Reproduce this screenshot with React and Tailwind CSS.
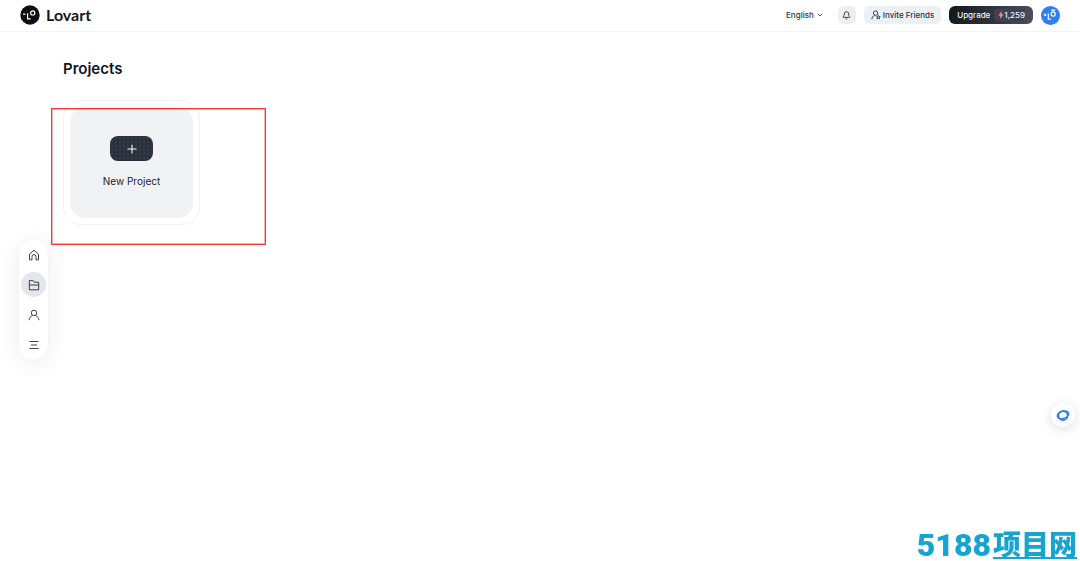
import React from "react";
import { ChevronDown, Bell, Plus } from "lucide-react";

const navItems = [
  {
    label: "Home",
    icon: (
      <path d="M1.5 10.8V5.2L6 1.2l4.5 4v5.6H8V7.6a2 2 0 0 0-4 0v3.2z" />
    ),
  },
  {
    label: "Projects",
    active: true,
    icon: (
      <path d="M1.3 10.8V1.6h3.8l1.2 1.6h4.4v7.6zM1.3 6h9.4" />
    ),
  },
  {
    label: "Account",
    icon: (
      <>
        <circle cx="6" cy="3.9" r="2.7" />
        <path d="M1 11.2c.4-2.4 1.8-4 3.4-4.9M11 11.2c-.4-2.4-1.8-4-3.4-4.9" />
      </>
    ),
  },
  {
    label: "Menu",
    icon: <path d="M1.5 2.5h9M3 6h6M1.5 9.5h9" />,
  },
];

function Logo() {
  return (
    <a href="#" className="flex items-center gap-1.5">
      <svg viewBox="0 0 20 20" className="h-5 w-5" aria-hidden="true">
        <circle cx="10" cy="10" r="9.7" fill="#0d0f14" />
        <g fill="none" stroke="#fff" strokeWidth="1.2">
          <path d="M3 9.2h2.4M7.6 8.2v5.6h3" />
          <circle cx="12.7" cy="7.9" r="2.1" />
        </g>
      </svg>
      <span className="font-['Lato','Liberation_Sans',sans-serif] text-[16px] leading-5 font-bold text-[#14161f]">
        Lovart
      </span>
    </a>
  );
}

function Header() {
  return (
    <header className="flex h-8 items-center justify-between border-b border-[#f3f4f6] px-5 pb-px text-[8px] font-medium text-[#2c3242]">
      <Logo />
      <div className="flex items-center gap-2">
        <button className="mr-1.5 flex items-center gap-0.5">
          English
          <ChevronDown className="h-2 w-2" strokeWidth={2.5} />
        </button>
        <button
          aria-label="Notifications"
          className="flex h-[18px] w-[18px] items-center justify-center rounded-md bg-[#eceff3]"
        >
          <Bell className="h-[9px] w-[9px]" strokeWidth={2.4} />
        </button>
        <button className="flex h-[18px] items-center gap-0.5 rounded-md bg-[#eceff3] px-[7px]">
          <svg
            viewBox="0 0 12 12"
            className="h-2.5 w-2.5"
            fill="none"
            stroke="#2c3242"
            strokeWidth="1.1"
            aria-hidden="true"
          >
            <circle cx="5.5" cy="3.8" r="2.6" />
            <path d="M1 11c.3-2.2 1.5-3.8 3.2-4.8M8.8 6.4l.7 1.4 1.5.2-1.1 1.1.3 1.5-1.4-.7-1.4.7.3-1.5L6.6 8l1.5-.2z" />
          </svg>
          Invite Friends
        </button>
        <button className="flex h-[18px] items-center gap-1 rounded-md bg-linear-to-r from-[#14181f] to-[#4a5060] px-2 text-[#eef1f6]">
          Upgrade
          <span className="flex items-center rounded bg-[#3d4352] pl-1">
            <svg viewBox="0 0 6 8" className="h-2 w-1.5" aria-hidden="true">
              <path d="M3.6 0 .4 4.6h2L2 8l3.6-4.8H3.4z" fill="#ff8a80" />
            </svg>
            1,259
          </span>
        </button>
        <button aria-label="Profile">
          <svg viewBox="0 0 20 20" className="h-[19px] w-[19px]">
            <circle cx="10" cy="10" r="10" fill="#2f80ed" />
            <g fill="none" stroke="#fff" strokeWidth="1.2">
              <path d="M3 9.4h2.6M4.3 8.2v2.4M7.7 8v6h3M10.6 4.3h4.4" />
              <circle cx="12.8" cy="8.4" r="2.2" />
            </g>
          </svg>
        </button>
      </div>
    </header>
  );
}

function SideNav() {
  return (
    <nav className="fixed top-[238px] left-[18px] flex flex-col gap-[5px] rounded-full border border-[#f3f4f6] bg-white px-0.5 py-[3px] shadow-[0_4px_24px_rgba(0,0,0,0.07)]">
      {navItems.map((item) => (
        <button
          key={item.label}
          aria-label={item.label}
          className={`flex h-[25px] w-[25px] items-center justify-center rounded-full ${
            item.active ? "bg-[#e3e6ea]" : ""
          }`}
        >
          <svg
            viewBox="0 0 12 12"
            className="h-3 w-3"
            fill="none"
            stroke="#3b4150"
            strokeWidth="1"
            strokeLinejoin="round"
          >
            {item.icon}
          </svg>
        </button>
      ))}
    </nav>
  );
}

function NewProjectCard() {
  return (
    <div className="relative w-fit">
      <div className="rounded-[18px] border border-[#f1f2f4] p-1.5">
        <button className="flex h-[111px] w-[123px] flex-col items-center justify-center gap-3 rounded-[15px] bg-[#f1f2f4]">
          <span className="flex h-[25px] w-[43px] items-center justify-center rounded-lg bg-[#2b303c] bg-[radial-gradient(#353b48_1px,transparent_1px)] bg-size-[4px_4px] text-white">
            <Plus className="h-3.5 w-3.5" strokeWidth={1.8} />
          </span>
          <span className="text-[10px] leading-4 text-[#1b2130]">
            New Project
          </span>
        </button>
      </div>
      <div className="pointer-events-none absolute top-2 -left-3 h-[137px] w-[215px] border border-[#f23a30] ring-1 ring-[#f23a30]/40 ring-inset" />
    </div>
  );
}

function ChatBubble() {
  return (
    <button
      aria-label="Assistant"
      className="fixed top-[403px] right-[5px] flex h-6 w-6 items-center justify-center rounded-full bg-white shadow-[0_2px_12px_rgba(0,0,0,0.14)]"
    >
      <svg viewBox="0 0 14 14" className="h-3.5 w-3.5" fill="none" stroke="#2979e8">
        <ellipse cx="7" cy="7.6" rx="4.6" ry="4.5" strokeWidth="1.6" />
        <ellipse
          cx="7"
          cy="6.8"
          rx="6"
          ry="3.6"
          strokeWidth="1.3"
          transform="rotate(-18 7 6.8)"
        />
      </svg>
    </button>
  );
}

function Watermark() {
  return (
    <div className="fixed right-[3px] bottom-0 flex items-end gap-0.5 text-[#16a5d0]">
      <span className="font-['Roboto','Liberation_Sans',sans-serif] text-[32px] leading-8 font-black">
        5188
      </span>
      <span className="mb-0.5 border-b-2 border-[#16a5d0] font-['Noto_Sans_CJK_SC',sans-serif] text-[28px] leading-7 font-black">
        项目网
      </span>
    </div>
  );
}

export default function App() {
  return (
    <div className="min-h-screen bg-white font-['Inter','Liberation_Sans',sans-serif]">
      <Header />
      <main className="px-[63px] pt-[25px]">
        <h1 className="mb-[19px] text-[15px] leading-6 font-semibold text-[#12151f]">
          Projects
        </h1>
        <NewProjectCard />
      </main>
      <SideNav />
      <ChatBubble />
      <Watermark />
    </div>
  );
}
